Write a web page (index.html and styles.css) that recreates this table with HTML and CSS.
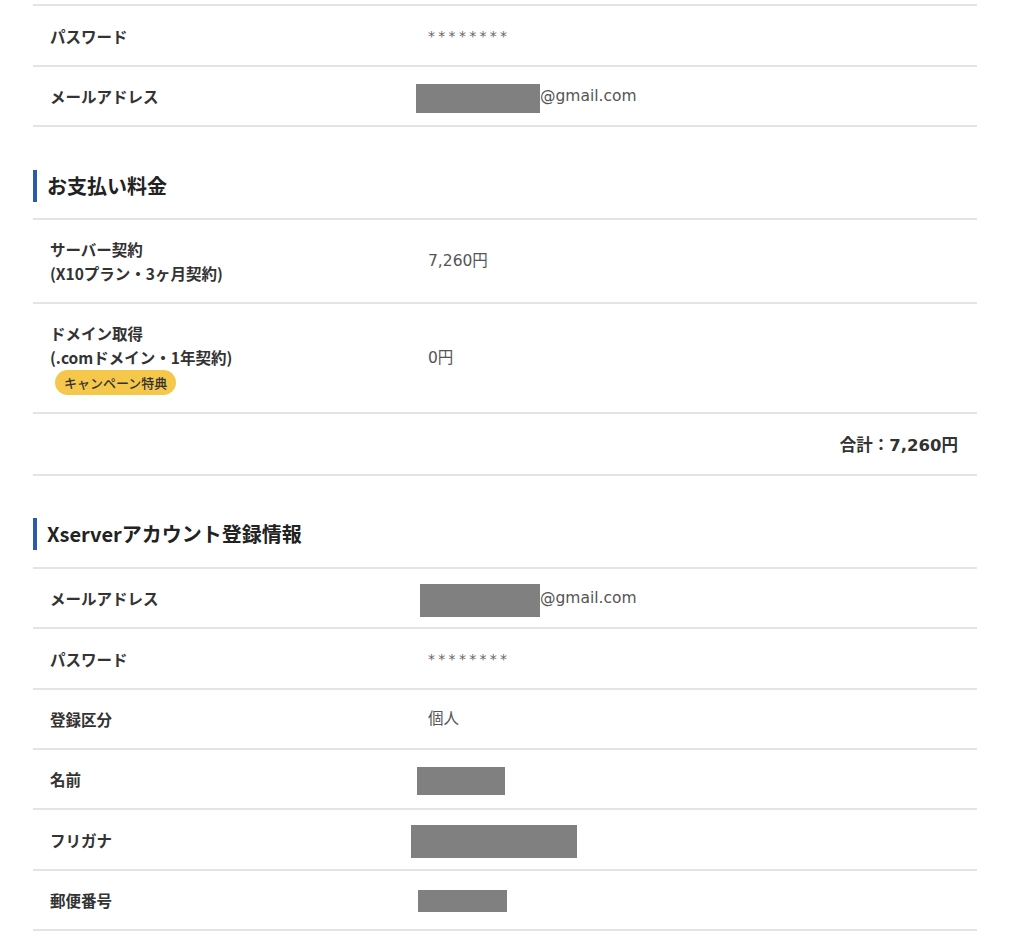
FILE: index.html
```html
<!DOCTYPE html>
<html lang="ja">
<head>
<meta charset="utf-8">
<link rel="stylesheet" href="styles.css">
<title>確認</title>
</head>
<body>
<div class="wrap">
  <div class="table">
    <div class="row row-61">
      <div class="label">パスワード</div>
      <div class="value"><span class="mask">********</span></div>
    </div>
    <div class="row">
      <div class="label">メールアドレス</div>
      <div class="value"><span class="redact r-mail1"></span>@gmail.com</div>
    </div>
  </div>

  <h2 class="heading heading-first">お支払い料金</h2>
  <div class="table">
    <div class="row row-tall">
      <div class="label">サーバー契約<br>(X10プラン・3ヶ月契約)</div>
      <div class="value">7,260円</div>
    </div>
    <div class="row row-tall">
      <div class="label">ドメイン取得<br>(.comドメイン・1年契約)<br><span class="badge">キャンペーン特典</span></div>
      <div class="value">0円</div>
    </div>
    <div class="row row-total">
      <div class="total">合計：7,260円</div>
    </div>
  </div>

  <h2 class="heading">Xserverアカウント登録情報</h2>
  <div class="table">
    <div class="row">
      <div class="label">メールアドレス</div>
      <div class="value"><span class="redact r-mail2"></span>@gmail.com</div>
    </div>
    <div class="row row-61">
      <div class="label">パスワード</div>
      <div class="value"><span class="mask">********</span></div>
    </div>
    <div class="row">
      <div class="label">登録区分</div>
      <div class="value">個人</div>
    </div>
    <div class="row">
      <div class="label">名前</div>
      <div class="value"><span class="redact r-name"></span></div>
    </div>
    <div class="row row-61">
      <div class="label">フリガナ</div>
      <div class="value"><span class="redact r-kana"></span></div>
    </div>
    <div class="row">
      <div class="label">郵便番号</div>
      <div class="value"><span class="redact r-zip"></span></div>
    </div>
  </div>
</div>
</body>
</html>
```

FILE: styles.css
```css
* { box-sizing: border-box; }

html, body {
  margin: 0;
  padding: 0;
  background: #ffffff;
}

body {
  font-family: "DejaVu Sans", "Noto Sans CJK JP", sans-serif;
  color: #333333;
}

.wrap {
  width: 944px;
  margin-left: 33px;
  padding-top: 4px;
}

.table {
  border-bottom: 2px solid #e4e4e4;
}

.row {
  display: grid;
  grid-template-columns: 395px 1fr;
  align-items: center;
  min-height: 60px;
  border-top: 2px solid #e4e4e4;
}

.row-61 {
  min-height: 61px;
}

.row-tall {
  padding: 17px 0 17px;
}

.label {
  padding-left: 17px;
  font-family: "Noto Sans CJK JP", sans-serif;
  font-weight: 700;
  font-size: 15.5px;
  line-height: 24px;
  color: #333333;
}

.value {
  display: flex;
  align-items: center;
  font-size: 15.5px;
  color: #555555;
  line-height: 24px;
}

.mask {
  font-size: 14px;
  letter-spacing: 3.3px;
  color: #666666;
}

.redact {
  display: inline-block;
  background: #808080;
}

.r-mail1 { width: 124px; height: 29px; margin-left: -12px; margin-top: 5px; }
.r-mail2 { width: 120px; height: 33px; margin-left: -8px; margin-top: 5px; }
.r-name  { width: 88px;  height: 28px; margin-left: -11px; margin-top: 4px; }
.r-kana  { width: 166px; height: 33px; margin-left: -17px; margin-top: 3px; }
.r-zip   { width: 89px;  height: 22px; margin-left: -10px; margin-top: 2px; }

.badge {
  display: inline-block;
  margin-top: 1px;
  margin-left: 5px;
  height: 25px;
  padding: 0 9px;
  border-radius: 13px;
  background: #f5c84c;
  font-size: 13px;
  font-weight: 500;
  line-height: 25px;
  color: #333333;
  vertical-align: top;
}

.row-total {
  display: flex;
  justify-content: flex-end;
  min-height: 62px;
  padding-right: 19px;
}

.total {
  font-family: "DejaVu Sans", "Noto Sans CJK JP", sans-serif;
  font-weight: 700;
  font-size: 16.5px;
  color: #333333;
}

.heading {
  margin: 43px 0 16px;
  height: 32px;
  border-left: 4px solid #2b5ba8;
  padding-left: 10px;
  font-family: "Noto Sans CJK JP", sans-serif;
  font-weight: 700;
  font-size: 20px;
  line-height: 32px;
  color: #222222;
}

.table + .heading:not(.heading-first) {
  margin-top: 42px;
  margin-bottom: 17px;
}
```
